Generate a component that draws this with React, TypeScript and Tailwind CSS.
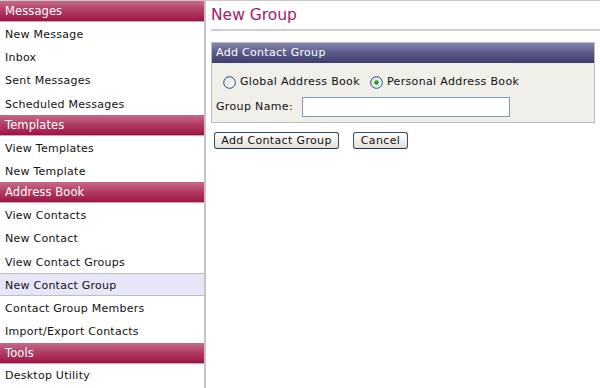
const sections = [
  { title: 'Messages', items: ['New Message', 'Inbox', 'Sent Messages', 'Scheduled Messages'] },
  { title: 'Templates', items: ['View Templates', 'New Template'] },
  {
    title: 'Address Book',
    items: [
      'View Contacts',
      'New Contact',
      'View Contact Groups',
      'New Contact Group',
      'Contact Group Members',
      'Import/Export Contacts',
    ],
  },
  { title: 'Tools', items: ['Desktop Utility'] },
];

const active = 'New Contact Group';

function Radio({ checked }: { checked?: boolean }) {
  const id = checked ? 'rg1' : 'rg0';
  return (
    <svg width="13" height="13" viewBox="0 0 13 13" className="shrink-0">
      <defs>
        <linearGradient id={id} x1="0" y1="0" x2="1" y2="1">
          <stop offset="0" stopColor="#dcdcd7" />
          <stop offset="1" stopColor="#ffffff" />
        </linearGradient>
      </defs>
      <circle cx="6.5" cy="6.5" r="5.8" fill={`url(#${id})`} stroke="#1c5180" strokeWidth="1" />
      {checked && <circle cx="6.5" cy="6.5" r="2.2" fill="#21a121" />}
    </svg>
  );
}

export default function App() {
  return (
    <div className="flex w-[600px] h-[388px] overflow-hidden bg-white border-t border-[#c8c8c8] font-['DejaVu_Sans',Verdana,sans-serif] text-[11px] tracking-[0.25px] text-[#111]">
      {/* Sidebar */}
      <div className="w-[206px] shrink-0 border-r-2 border-[#c4c4c4] flex flex-col">
        {sections.map((s) => (
          <div key={s.title}>
            <div className="h-[20.67px] flex items-center pl-[5px] pt-[1px] text-white text-[11.5px] tracking-[0.1px] bg-gradient-to-b from-[#c66a87] via-[#b03a63] to-[#9c1244] border-b border-[#d8a0b4]">
              {s.title}
            </div>
            {s.items.map((it) => (
              <div
                key={it}
                className={
                  'h-[23.33px] flex items-center pl-[5px] pt-[3px] ' +
                  (it === active ? 'bg-[#e6e6f8] border-y border-[#bdbdc8]' : '')
                }
              >
                {it}
              </div>
            ))}
          </div>
        ))}
      </div>

      {/* Content */}
      <div className="flex-1 pl-[5px] pr-[5px]">
        <div className="h-[30px] flex items-center pt-[2px] text-[15.5px] tracking-normal text-[#a0206c] border-b-2 border-[#cfcfcf] mb-[11px] -mr-[5px]">
          New Group
        </div>
        <div className="border border-[#bcbcbc] bg-[#f0efea]">
          <div className="h-[20px] flex items-center pl-[4px] pt-[1px] text-white tracking-[0.3px] bg-gradient-to-b from-[#8585ad] via-[#5b5b8c] to-[#3c3c6e]">
            Add Contact Group
          </div>
          <div className="px-[4px] pt-[10px] pb-[5px]">
            <div className="flex items-center gap-[4px] pl-[7px] h-[18px] tracking-[0.35px]">
              <Radio />
              <span className="mr-[6px]">Global Address Book</span>
              <Radio checked />
              <span>Personal Address Book</span>
            </div>
            <div className="flex items-center mt-[6px] h-[20px] tracking-[0.35px]">
              <span className="w-[86px]">Group Name:</span>
              <input className="w-[208px] h-[20px] bg-white border border-[#7f9db9] outline-none" />
            </div>
          </div>
        </div>
        <div className="flex gap-[14px] mt-[9px] pl-[3px]">
          <button className="w-[125px] h-[17px] rounded-[3px] border border-[#2f4f6f] border-b-[#1c3550] bg-gradient-to-b from-white to-[#e2e0d8] text-[11px] tracking-[0.35px] leading-none">
            Add Contact Group
          </button>
          <button className="w-[55px] h-[17px] rounded-[3px] border border-[#2f4f6f] border-b-[#1c3550] bg-gradient-to-b from-white to-[#e2e0d8] text-[11px] tracking-[0.35px] leading-none">
            Cancel
          </button>
        </div>
      </div>
    </div>
  );
}
